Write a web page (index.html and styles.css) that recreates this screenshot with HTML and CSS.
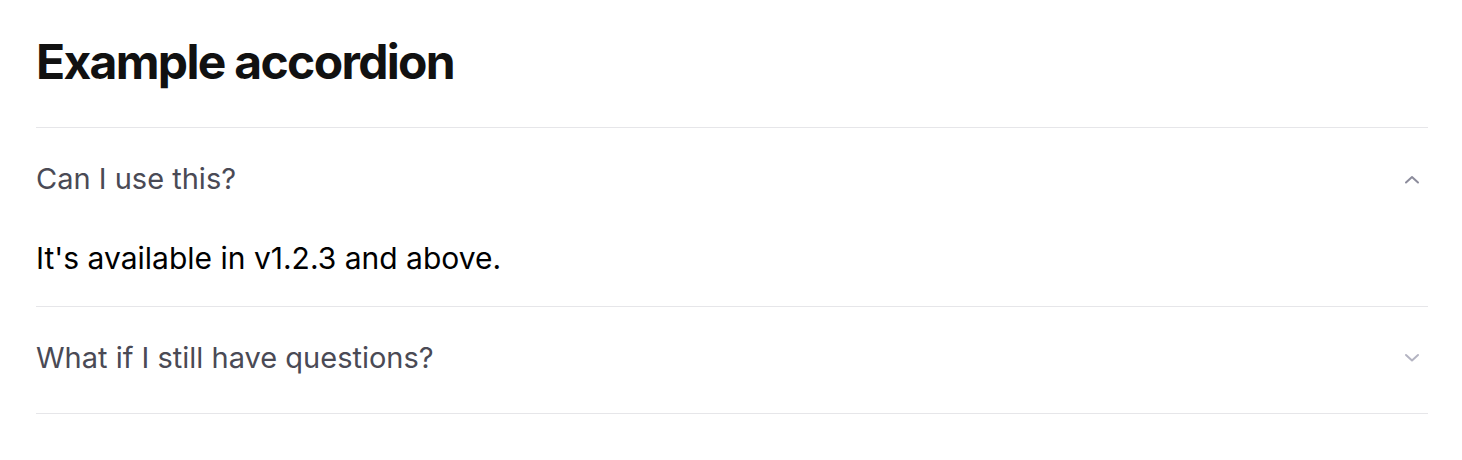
FILE: index.html
```html
<!DOCTYPE html>
<html>
<head>
<meta charset="utf-8">
<link rel="stylesheet" href="styles.css">
</head>
<body>
<main class="page">
  <h1 class="title">Example accordion</h1>
  <div class="accordion">
    <div class="item">
      <button class="trigger">
        <span>Can I use this?</span>
        <svg class="chev chev-open" width="20" height="20" viewBox="0 0 20 20" fill="none"><path d="M4 13.5L10 8L16 13.5" stroke="currentColor" stroke-width="2" stroke-linecap="round" stroke-linejoin="round"/></svg>
      </button>
      <div class="content">It's available in v1.2.3 and above.</div>
    </div>
    <div class="item">
      <button class="trigger">
        <span>What if I still have questions?</span>
        <svg class="chev" width="20" height="20" viewBox="0 0 20 20" fill="none"><path d="M4 7L10 12.5L16 7" stroke="currentColor" stroke-width="2" stroke-linecap="round" stroke-linejoin="round"/></svg>
      </button>
    </div>
  </div>
</main>
</body>
</html>
```
FILE: styles.css
```css
* { box-sizing: border-box; }
body {
  margin: 0;
  background: #fff;
  font-family: Inter, "Liberation Sans", sans-serif;
}
.page {
  padding: 34px 34px 0 36px;
}
.title {
  margin: 0 0 37px 0;
  font-size: 48px;
  line-height: 56px;
  font-weight: 700;
  letter-spacing: -0.035em;
  color: #111111;
}
.accordion {
  border-top: 1px solid #e6e6e9;
}
.item {
  border-bottom: 1px solid #e6e6e9;
}
.trigger {
  width: 100%;
  display: flex;
  align-items: center;
  justify-content: space-between;
  background: none;
  border: 0;
  padding: 34px 0 38px 0;
  font-family: inherit;
  font-size: 29px;
  line-height: 34px;
  color: #4a4a55;
  text-align: left;
  cursor: pointer;
}
.chev { color: #b4b4c2; margin-right: 6px; }
.chev-open { color: #8c8c9c; }
.content {
  padding: 9px 0 33px 0;
  font-size: 30px;
  line-height: 30px;
  color: #000;
}
```
